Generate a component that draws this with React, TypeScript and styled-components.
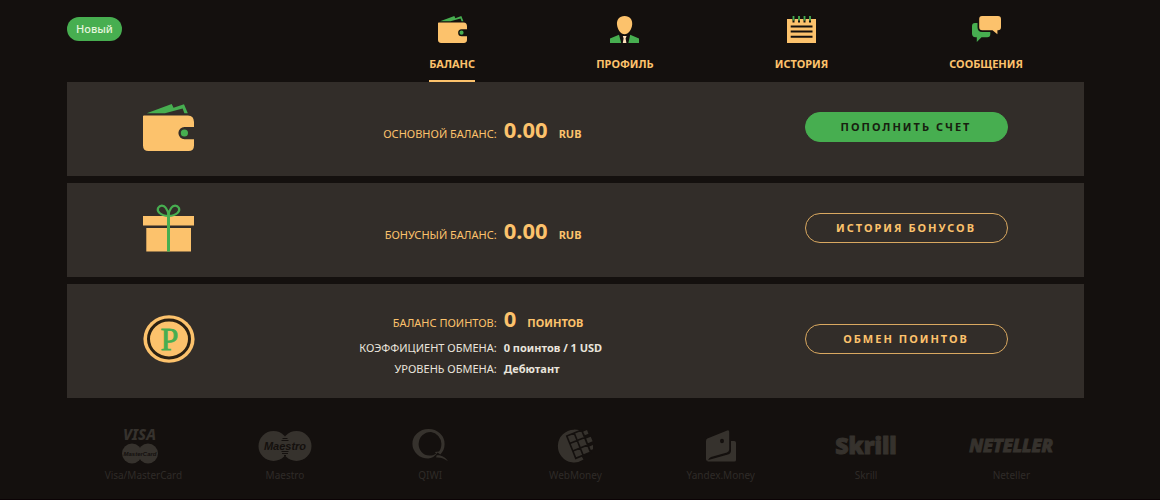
import React from "react";
import styled, { createGlobalStyle } from "styled-components";

const color = {
  page: "#14100e",
  panel: "#322d29",
  gold: "#fcc26c",
  green: "#47ae50",
  light: "#e9e4dc",
  logo: "#36322d",
  caption: "#2f2b28",
};

const GlobalStyle = createGlobalStyle`
  *, *::before, *::after { box-sizing: border-box; }
  body {
    margin: 0;
    background: ${color.page};
    color: ${color.gold};
    font-family: "Noto Sans", "Open Sans", sans-serif;
    font-size: 11px;
  }
`;

const Page = styled.div`
  min-height: 100vh;
  padding: 0 76px 0 67px;
  border-bottom: 1px solid #0b0305;
`;

const Header = styled.header`
  display: flex;
  align-items: flex-start;
  justify-content: space-between;
  padding-right: 61px;
`;

const Badge = styled.span`
  margin-top: 17px;
  padding: 0 9px;
  border-radius: 12px;
  background: ${color.green};
  color: #e4f5dc;
  font-weight: 500;
  line-height: 24px;
`;

const Nav = styled.nav`
  display: flex;
  gap: 121px;
`;

const NavLink = styled.a<{ $active?: boolean }>`
  display: flex;
  flex-direction: column;
  align-items: center;
  gap: 13px;
  padding: 16px 0 8px;
  border-bottom: 2px solid ${(p) => (p.$active ? color.gold : "transparent")};
  color: ${color.gold};
  font-weight: 700;
  line-height: 16px;
  text-decoration: none;
  text-transform: uppercase;
`;

const Panels = styled.main`
  display: flex;
  flex-direction: column;
  gap: 7px;
`;

const Panel = styled.section`
  display: grid;
  grid-template-columns: 20% 45% 35%;
  align-items: center;
  min-height: 94px;
  padding: 18px 0 19px;
  background: ${color.panel};
`;

const Cell = styled.div`
  display: flex;
  justify-content: center;
  padding-bottom: 3px;
`;

const Facts = styled.dl`
  display: flex;
  flex-direction: column;
  margin: 0;
  padding-left: 2px;
`;

const Fact = styled.div<{ $main?: boolean }>`
  display: grid;
  grid-template-columns: 1fr 1fr;
  column-gap: 7px;
  align-items: baseline;
  line-height: ${(p) => (p.$main ? "16px" : "21px")};
  color: ${(p) => (p.$main ? color.gold : color.light)};

  &:nth-child(2) { margin-top: 3px; }
`;

const Label = styled.dt`
  text-align: right;
  text-transform: uppercase;
  white-space: nowrap;
`;

const Value = styled.dd`
  margin: 0;
  font-weight: 700;
  white-space: nowrap;
`;

const Amount = styled.span`
  margin-right: 11px;
  font-size: 22px;
  line-height: 32px;
`;

const Action = styled.button<{ $filled?: boolean }>`
  width: 203px;
  height: 30px;
  padding: 0 0 2px;
  border: 1px solid ${(p) => (p.$filled ? color.green : "#d9a860")};
  border-radius: 15px;
  background: ${(p) => (p.$filled ? color.green : "transparent")};
  color: ${(p) => (p.$filled ? "#17200f" : color.gold)};
  font: 700 11px "Noto Sans", "Open Sans", sans-serif;
  letter-spacing: 2px;
  text-transform: uppercase;
  cursor: pointer;
`;

const Methods = styled.ul`
  display: grid;
  grid-template-columns: repeat(7, 1fr);
  margin: 0;
  padding: 28px 0 12px;
  list-style: none;
`;

const Method = styled.li`
  display: flex;
  flex-direction: column;
  align-items: center;
  gap: 2px;
`;

const Logo = styled.div`
  display: flex;
  align-items: center;
  height: 40px;
`;

const Caption = styled.span`
  width: 70px;
  color: ${color.caption};
  font-size: 10px;
  line-height: 14px;
  text-align: center;
  white-space: nowrap;
`;

const WalletIcon = ({ width, height }: { width: number; height: number }) => (
  <svg width={width} height={height} viewBox="0 0 51 47" preserveAspectRatio="none" aria-hidden="true">
    <path fill={color.green} d="M3.7 9.2 28.7 0l1.8 3.7L41 .2l3.8 9h-3.4l-1.8-4.8L22 9.2z" />
    <path
      fill={color.gold}
      d="M0 12.2Q0 11.4 1 11.4H45Q51 11.8 51 18V23H41.5A6.1 6.1 0 0 0 41.5 35.2H51V41.5Q51 47 45.5 47H5.5Q0 47 0 41.5Z"
    />
    <circle cx="41.4" cy="29" r="3.6" fill={color.green} />
  </svg>
);

const GiftIcon = () => (
  <svg width="51" height="48" viewBox="0 0 51 48" aria-hidden="true">
    <path fill={color.gold} d="M0 12h51v9.4H0zM3.3 24h44.7v23.6H3.3z" />
    <path fill={color.green} d="M24 12h3v35.6h-3z" />
    <path
      fill="none"
      stroke={color.green}
      strokeWidth="2.2"
      d="M25.5 12C17 11.6 13.5 7.2 15.2 3.8 17 .8 20.8 1 22.8 3.8 24.6 6.2 25.5 9 25.5 12ZM25.5 12C34 11.6 37.5 7.2 35.8 3.8 34 .8 30.2 1 28.2 3.8 26.4 6.2 25.5 9 25.5 12Z"
    />
  </svg>
);

const CoinIcon = () => (
  <svg width="52" height="48" viewBox="0 0 52 48" aria-hidden="true">
    <ellipse cx="26" cy="24" rx="25.6" ry="23.8" fill={color.gold} />
    <ellipse cx="26" cy="24" rx="20.5" ry="18.9" fill={color.gold} stroke="#2b2113" strokeWidth="3" />
    <text x="26.5" y="35" textAnchor="middle" fill={color.green} stroke={color.green} strokeWidth="0.8" fontFamily="Liberation Serif, serif" fontSize="32">
      P
    </text>
  </svg>
);

const ProfileIcon = () => (
  <svg width="29" height="27" viewBox="0 0 29 27" aria-hidden="true">
    <path fill={color.gold} d="M14.6 0C20 0 22.6 3.6 22.2 8.6 21.9 13.6 18.4 18.3 14.6 18.3S7.3 13.6 7 8.6C6.6 3.6 9.2 0 14.6 0Z" />
    <path fill={color.green} d="M0 27V22.4L9 18.8 11.2 27zM29 27V22.4L20.2 18.8 18.4 27z" />
    <path fill="#ffe0bb" d="M12.8 20h3.8l-1 2.5.8 4.5h-3.6l.8-4.5z" />
  </svg>
);

const HistoryIcon = () => (
  <svg width="29" height="27" viewBox="0 0 29 27" aria-hidden="true">
    <path fill={color.gold} d="M0 3h29v24H0z" />
    <path stroke={color.page} strokeWidth="2" d="M3.7 10.5h21.8M3.7 15.6h21.8M3.7 20.7h21.8" />
    <path stroke={color.page} strokeWidth="2" d="M6.5 3v3.6M12 3v3.6M17.5 3v3.6M23 3v3.6" />
    <path stroke={color.green} strokeWidth="1.8" d="M6.5 0v4.6M12 0v4.6M17.5 0v4.6M23 0v4.6" />
  </svg>
);

const MessagesIcon = () => (
  <svg width="29" height="27" viewBox="0 0 29 27" aria-hidden="true">
    <path fill={color.green} d="M3 7H15.5Q18.3 7 18.3 10V18Q18.3 21.2 15.3 21.2H9.5L4.8 26V21.2H3.5Q0 21.2 0 17.5V10Q0 7 3 7Z" />
    <path
      fill={color.gold}
      stroke={color.page}
      strokeWidth="3.4"
      paintOrder="stroke"
      d="M10 0H26Q29 0 29 3V11.3Q29 14.3 26 14.3H25.4V18.2L20.5 14.3H10.2Q7.2 14.3 7.2 11.3V3Q7.2 0 10 0Z"
    />
  </svg>
);

const VisaMasterCardLogo = () => (
  <svg width="42" height="46" viewBox="-2 -4 42 46" fill={color.logo} aria-hidden="true">
    <text x="18.5" y="13" textAnchor="middle" fontFamily="Noto Sans, sans-serif" fontWeight="800" fontStyle="italic" fontSize="15">
      VISA
    </text>
    <circle cx="11" cy="26.5" r="10" />
    <circle cx="27" cy="26.5" r="10" />
    <text x="19" y="28.6" textAnchor="middle" fill={color.page} fontFamily="Liberation Sans, sans-serif" fontWeight="700" fontStyle="italic" fontSize="6">
      MasterCard
    </text>
  </svg>
);

const MaestroLogo = () => (
  <svg width="54" height="30" viewBox="0 0 54 30" fill={color.logo} aria-hidden="true">
    <circle cx="15.5" cy="15" r="15" />
    <circle cx="38.5" cy="15" r="15" />
    <path stroke={color.page} d="M24.5 7.5h5M23.5 9.5h7M23.5 20.5h7M24 22.5h6M26 24.5h2" />
    <text x="27" y="18.8" textAnchor="middle" fill={color.page} fontFamily="Liberation Sans, sans-serif" fontWeight="700" fontStyle="italic" fontSize="11">
      Maestro
    </text>
  </svg>
);

const QiwiLogo = () => (
  <svg width="36" height="34" viewBox="0 0 36 34" fill={color.logo} aria-hidden="true">
    <path
      fillRule="evenodd"
      d="M16.5 0A16 15 0 0 1 32.6 15C32.6 19.5 31 22.8 28.3 25.4L25.6 23.4C23 27.5 19.6 29 16.3 29.6A16 14.8 0 0 1 16.5 0ZM19 3A12 12.3 0 0 0 6.6 15C6.6 21 11 26.6 17.5 26.6 20 26.6 22 26 24.2 24.4L22.8 23 27 22.6C28.6 20.5 29.4 18 29.4 14.8A12 12.3 0 0 0 19 3Z"
    />
    <path d="M24.5 26.4C29 25.6 33.5 28.4 36 32.2 32.4 29.8 28.8 28.2 24.2 28.6Z" />
  </svg>
);

const WebMoneyLogo = () => (
  <svg width="36" height="34" viewBox="0 0 36 34" fill={color.logo} aria-hidden="true">
    <path d="M28 4.6A16.4 16.4 0 1 0 26.5 30.6L20 20 12 9Z" />
    <g transform="translate(15 9.3) rotate(-22)" stroke={color.page} strokeWidth="1.6">
      <path d="M-4-4h8v8h-8zM4-4h8v8h-8zM-4 4h8v8h-8zM4 4h8v8h-8zM-4 12h8v8h-8zM4 12h8v8h-8z" />
      <path stroke="none" d="M13-2h4v4h-4zM13 5.5h5v5h-5zM13 14h4v4h-4z" />
    </g>
  </svg>
);

const YandexMoneyLogo = () => (
  <svg width="30" height="32" viewBox="0 0 30 32" fill={color.logo} aria-hidden="true">
    <path d="M25 11h3.2Q30 11 30 12.8V30Q30 31.6 28.4 31.6H1.8L.6 30.4 22 24.6Q25 23.4 25 20.4Z" />
    <path
      fillRule="evenodd"
      d="M1.4 8.6 21.2.4Q23.2-.2 23.2 1.8V19.6Q23.2 21.8 21 22.6L5 27Q3 28 2 30.2L.4 30.6Q0 30 0 29V11Q0 9.4 1.4 8.6ZM16 8.8A2 2.2 0 1 0 16 13.2 2 2.2 0 1 0 16 8.8Z"
    />
  </svg>
);

const SkrillLogo = () => (
  <svg width="76" height="36" viewBox="0 0 76 36" fill={color.logo} aria-hidden="true">
    <text x="38" y="26" textAnchor="middle" stroke={color.logo} strokeWidth="1" fontFamily="Open Sans, sans-serif" fontWeight="800" fontSize="23">
      Skrill
    </text>
  </svg>
);

const NetellerLogo = () => (
  <svg width="96" height="30" viewBox="0 0 96 30" fill={color.logo} aria-hidden="true">
    <text x="48" y="21" textAnchor="middle" stroke={color.logo} strokeWidth="1" fontFamily="Noto Sans, sans-serif" fontWeight="800" fontStyle="italic" fontSize="18">
      NETELLER
    </text>
  </svg>
);

const navItems = [
  { title: "Баланс", icon: <WalletIcon width={29} height={27} />, active: true },
  { title: "Профиль", icon: <ProfileIcon /> },
  { title: "История", icon: <HistoryIcon /> },
  { title: "Сообщения", icon: <MessagesIcon /> },
];

const methods = [
  { name: "Visa/MasterCard", logo: <VisaMasterCardLogo /> },
  { name: "Maestro", logo: <MaestroLogo /> },
  { name: "QIWI", logo: <QiwiLogo /> },
  { name: "WebMoney", logo: <WebMoneyLogo /> },
  { name: "Yandex.Money", logo: <YandexMoneyLogo /> },
  { name: "Skrill", logo: <SkrillLogo /> },
  { name: "Neteller", logo: <NetellerLogo /> },
];

interface BalanceProps {
  icon: React.ReactNode;
  label: string;
  amount: string;
  unit: string;
  action: string;
  filled?: boolean;
  details?: { label: string; value: string }[];
}

const Balance = ({ icon, label, amount, unit, action, filled, details = [] }: BalanceProps) => (
  <Panel>
    <Cell>{icon}</Cell>
    <Facts>
      <Fact $main>
        <Label>{label}</Label>
        <Value>
          <Amount>{amount}</Amount>
          {unit}
        </Value>
      </Fact>
      {details.map((d) => (
        <Fact key={d.label}>
          <Label>{d.label}</Label>
          <Value>{d.value}</Value>
        </Fact>
      ))}
    </Facts>
    <Cell>
      <Action type="button" $filled={filled}>
        {action}
      </Action>
    </Cell>
  </Panel>
);

export default function App() {
  return (
    <>
      <GlobalStyle />
      <Page>
        <Header>
          <Badge>Новый</Badge>
          <Nav>
            {navItems.map((item) => (
              <NavLink key={item.title} href="#" $active={item.active}>
                {item.icon}
                {item.title}
              </NavLink>
            ))}
          </Nav>
        </Header>
        <Panels>
          <Balance icon={<WalletIcon width={51} height={47} />} label="Основной баланс:" amount="0.00" unit="RUB" action="Пополнить счет" filled />
          <Balance icon={<GiftIcon />} label="Бонусный баланс:" amount="0.00" unit="RUB" action="История бонусов" />
          <Balance
            icon={<CoinIcon />}
            label="Баланс поинтов:"
            amount="0"
            unit="ПОИНТОВ"
            action="Обмен поинтов"
            details={[
              { label: "Коэффициент обмена:", value: "0 поинтов / 1 USD" },
              { label: "Уровень обмена:", value: "Дебютант" },
            ]}
          />
        </Panels>
        <Methods>
          {methods.map((m) => (
            <Method key={m.name}>
              <Logo>{m.logo}</Logo>
              <Caption>{m.name}</Caption>
            </Method>
          ))}
        </Methods>
      </Page>
    </>
  );
}
